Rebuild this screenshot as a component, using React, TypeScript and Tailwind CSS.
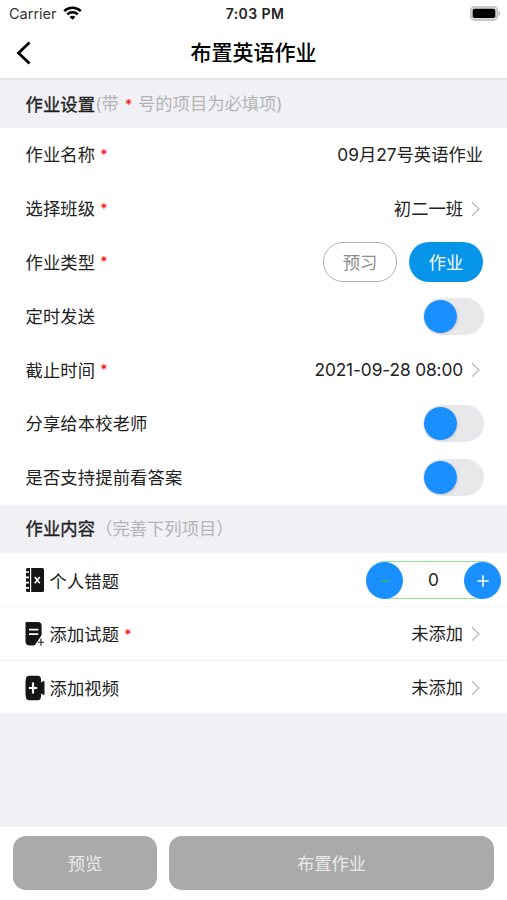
import type { ReactNode } from 'react';

function StatusBar() {
  return (
    <div className="grid h-[27px] grid-cols-[1fr_auto_1fr] items-center pt-px pr-1.5 pl-[9px]">
      <div className="flex items-center gap-1.5">
        <span className="text-[14.5px] leading-none text-[#333]">Carrier</span>
        <svg className="mb-0.5" width="19" height="14" viewBox="0 0 19 14" fill="none" stroke="#000" strokeWidth="2.5">
          <path d="M1.2 5.2C5.8 .7 13.2 .7 17.8 5.2" />
          <path d="M4.2 8.3c3-2.8 7.6-2.8 10.6 0" />
          <path d="M9.5 13.8 6.6 10.9c1.6-1.5 4.2-1.5 5.8 0z" fill="#000" stroke="none" />
        </svg>
      </div>
      <span className="text-center text-[14px] leading-none font-semibold tracking-[0.4px] whitespace-nowrap text-[#222]">
        7:03 PM
      </span>
      <svg className="mb-px justify-self-end" width="31" height="15" viewBox="0 0 31 15">
        <rect x="0.7" y="0.8" width="26.8" height="13.2" rx="3.8" fill="#ddd" stroke="#b9b9b9" strokeWidth="1.3" />
        <rect x="2.7" y="2.8" width="22.6" height="9.2" rx="1.8" fill="#000" />
        <path d="M28.6 5.2c2 .7 2 3.7 0 4.4z" fill="#aaa" />
      </svg>
    </div>
  );
}

function Star() {
  return <span className="mb-0.5 ml-[5px] text-[14px] leading-[17px] font-medium text-[#ff1010]">*</span>;
}

function Chevron() {
  return (
    <svg className="mr-[3px] ml-2" width="9" height="16" viewBox="0 0 9 16" fill="none" stroke="#bfbfc3" strokeWidth="1.5">
      <path d="M1 1.2 8 8l-7 6.8" />
    </svg>
  );
}

function Switch() {
  return (
    <button className="-mr-px flex h-[37px] w-[61px] items-center rounded-full bg-[#e8e8ea] pl-px">
      <span className="size-[33px] rounded-full bg-[#1a8fff] shadow-[1px_1px_3px_rgba(0,0,0,0.1)]" />
    </button>
  );
}

function SectionHeader({ title, children }: { title: string; children: ReactNode }) {
  return (
    <div className="flex h-12 items-center bg-[#f0f0f5] pt-px pl-[25.5px] whitespace-pre">
      <span className="tracking-[0.15px] text-[#222] [-webkit-text-stroke:0.35px_#222]">{title}</span>
      <span className="text-[#b4b4b7]">{children}</span>
    </div>
  );
}

type RowProps = {
  label: string;
  required?: boolean;
  children: ReactNode;
};

function Label({ text, required }: { text: string; required?: boolean }) {
  return (
    <div className="flex items-center pt-px tracking-[0.15px]">
      {text}
      {required && <Star />}
    </div>
  );
}

function SettingRow({ label, required, children }: RowProps) {
  return (
    <div className="flex h-[53.8px] items-center justify-between pr-6 pl-[25.5px]">
      <Label text={label} required={required} />
      <div className="flex items-center">{children}</div>
    </div>
  );
}

function ContentRow({ label, required, icon, children }: RowProps & { icon: ReactNode }) {
  return (
    <div className="flex h-[53.7px] items-center justify-between border-b border-[#f2f2f4] pt-px pl-[25px]">
      <div className="flex items-center pt-0.5">
        <span className="mr-[4.5px] mb-0.5">{icon}</span>
        <Label text={label} required={required} />
      </div>
      <div className="flex items-center">{children}</div>
    </div>
  );
}

function NotebookIcon() {
  return (
    <svg width="20" height="26" viewBox="0 0 20 26">
      <path d="M2.5 1H5v24H2.5Q1 25 1 23.5v-21Q1 1 2.5 1z" fill="#151515" />
      <path d="M6.2 1h11.300Q19 1 19 2.500v21q0 1.500-1.500 1.500H6.200z" fill="#151515" />
      <path d="M0 5h4M0 10.300h4M0 15.600h4M0 20.900h4" stroke="#fff" strokeWidth="1.7" />
      <path d="m9.800 10 5 6.200m0-6.200-5 6.200" stroke="#fff" strokeWidth="1.6" />
    </svg>
  );
}

function QuestionIcon() {
  return (
    <svg width="20" height="26" viewBox="0 0 20 26">
      <path
        d="M1.500 1H13q3.600 0 3.600 3.600V14l-5.800 9q-1 1.600-2.800 1.600H5q-4.500 0-4.500-4V2Q.5 1 1.500 1z"
        fill="#151515"
      />
      <path d="M4 8.700h9.300M4 13.200h9.300" stroke="#fff" strokeWidth="1.8" />
      <path d="M16 17.400v7.400M13 21.200h6" stroke="#222" strokeWidth="1.1" />
    </svg>
  );
}

function VideoIcon() {
  return (
    <svg width="20" height="26" viewBox="0 0 20 26">
      <path
        d="M4.500.8h8Q16 .8 16 4.500v3l2.300-1.300q1.200-.5 1.200.8v12q0 1.300-1.200.8L16 18.500v3q0 3.700-3.500 3.700h-8Q.8 25.200.8 21.500l-.3-2v-13l.3-2Q.8.800 4.500.8z"
        fill="#151515"
      />
      <path d="M8 7.600v10.800M3.800 13h8.400" stroke="#fff" strokeWidth="2.2" />
    </svg>
  );
}

function Stepper() {
  return (
    <div className="mr-[6px] flex h-[38px] w-[135px] items-center justify-between rounded-full border-y border-[#8fe39a]">
      <button className="flex size-[37px] shrink-0 items-center justify-center rounded-full bg-[#1a8fff]">
        <svg width="12" height="12" viewBox="0 0 12 12" stroke="#22b97c" strokeWidth="1.8">
          <path d="M2.500 7h7" />
        </svg>
      </button>
      <span>0</span>
      <button className="flex size-[37px] shrink-0 items-center justify-center rounded-full bg-[#1a8fff] pt-0.5">
        <svg width="12" height="12" viewBox="0 0 12 12" stroke="#fff" strokeWidth="1.6">
          <path d="M6 .3v11.400M.3 6h11.400" />
        </svg>
      </button>
    </div>
  );
}

function NotAdded() {
  return (
    <div className="mr-6 flex items-center">
      未添加
      <Chevron />
    </div>
  );
}

export default function App() {
  return (
    <div className="flex h-[900px] w-[507px] flex-col bg-white font-[Inter,'Noto_Sans_CJK_SC',sans-serif] text-[17.3px] leading-6 text-[#222]">
      <StatusBar />
      <header className="grid h-[53px] grid-cols-[1fr_auto_1fr] items-center border-b-2 border-[#e6e6e9]">
        <svg className="ml-4" width="16" height="24" viewBox="0 0 16 24" fill="none" stroke="#000" strokeWidth="2.8">
          <path d="M13.500 1.500 2.500 12l11 10.500" />
        </svg>
        <h1 className="pt-px text-[21px] leading-7 font-medium text-black">布置英语作业</h1>
      </header>

      <SectionHeader title="作业设置">
        (带<span className="text-[14px] font-medium tracking-[-0.6px] text-[#ff1010]">{'  *  '}</span>号的项目为必填项)
      </SectionHeader>
      <SettingRow label="作业名称" required>
        <span className="pt-px">09月27号英语作业</span>
      </SettingRow>
      <SettingRow label="选择班级" required>
        <span className="pt-px">初二一班</span>
        <Chevron />
      </SettingRow>
      <SettingRow label="作业类型" required>
        <button className="mr-3 h-10 w-[74px] rounded-full border border-[#b3b3b3] pt-px text-[#8c8c8c]">预习</button>
        <button className="h-10 w-[74px] rounded-full bg-[#0795ea] pt-px text-white">作业</button>
      </SettingRow>
      <SettingRow label="定时发送">
        <Switch />
      </SettingRow>
      <SettingRow label="截止时间" required>
        <span className="tracking-[-0.12px]">2021-09-28 08:00</span>
        <Chevron />
      </SettingRow>
      <SettingRow label="分享给本校老师">
        <Switch />
      </SettingRow>
      <SettingRow label="是否支持提前看答案">
        <Switch />
      </SettingRow>

      <SectionHeader title="作业内容">（完善下列项目）</SectionHeader>
      <div className="pt-[0.8px]">
        <ContentRow label="个人错题" icon={<NotebookIcon />}>
          <Stepper />
        </ContentRow>
        <ContentRow label="添加试题" required icon={<QuestionIcon />}>
          <NotAdded />
        </ContentRow>
        <ContentRow label="添加视频" icon={<VideoIcon />}>
          <NotAdded />
        </ContentRow>
      </div>

      <div className="flex-1 bg-[#f0f0f5]" />
      <footer className="flex h-[73px] gap-3 px-[13px] pt-[9px] pb-[10px] text-[#e9e9e9]">
        <button className="w-[144px] rounded-[13px] bg-[#aaa] pt-0.5">预览</button>
        <button className="flex-1 rounded-[13px] bg-[#aaa] pt-0.5">布置作业</button>
      </footer>
    </div>
  );
}
